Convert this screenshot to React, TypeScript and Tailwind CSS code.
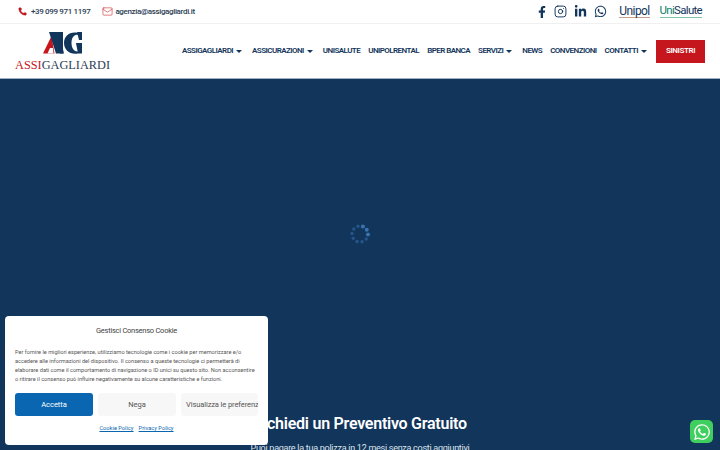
import { Phone, Mail, Instagram } from 'lucide-react';
import { FaFacebookF, FaLinkedinIn, FaWhatsapp } from 'react-icons/fa';

const titleFont = "font-['Roboto','Liberation_Sans',sans-serif]";

const navItems = [
  { label: 'ASSIGAGLIARDI', caret: true },
  { label: 'ASSICURAZIONI', caret: true },
  { label: 'UNISALUTE' },
  { label: 'UNIPOLRENTAL' },
  { label: 'BPER BANCA' },
  { label: 'SERVIZI', caret: true },
  { label: 'NEWS' },
  { label: 'CONVENZIONI' },
  { label: 'CONTATTI', caret: true },
];

function Caret() {
  return <span className="ml-[3px] mr-[2px] h-0 w-0 border-x-[3px] border-t-[3px] border-x-transparent border-t-[#12355b]" />;
}

function Logo() {
  return (
    <div className="flex w-[95px] flex-col items-center">
      <svg width="40" height="23" viewBox="0 0 40 23">
        <path d="M0 21.5 L8.5 4 L11.5 21.5 Z" fill="#c4161c" />
        <path d="M4.5 21.5 L7 16 H10 L10.5 21.5 Z" fill="#fff" />
        <path d="M6 0 H16 L21 21.5 H13 Z" fill="#12355b" />
        <path d="M15 0 H20 V21.5 H17 Z" fill="#12355b" />
        <path d="M35 1 C27 -1 21 4 21 11 C21 18 27 23 35 21.5 V19.5 C31 20 28.5 16 28.5 11 C28.5 6 31 2 35 3 Z" fill="#12355b" />
        <path d="M34 0 H39 V8 H36 Z M33 11 H39 V21.5 H35 Z" fill="#12355b" />
      </svg>
      <div className="mt-[4px] whitespace-nowrap font-['Liberation_Serif',serif] text-[12.3px] leading-[12px] text-[#2c3e55]">
        <span className="text-[#c4161c]">ASSI</span>GAGLIARDI
      </div>
    </div>
  );
}

function PartnerLogos() {
  return (
    <div className="ml-[12px] flex items-center gap-[10px] leading-none">
      <span className="border-b border-[#c9a08c] text-[12px] tracking-[-0.6px] text-[#12355b]">Unipol</span>
      <span className="border-b border-[#7fc7a5] text-[11.5px] tracking-[-0.7px] text-[#12355b]">
        <span className="text-[#0d7f6b]">Uni</span>Salute
      </span>
    </div>
  );
}

function Spinner() {
  const dots = Array.from({ length: 10 }, (_, i) => (i * Math.PI * 2) / 10);
  return (
    <svg width="22" height="22" viewBox="0 0 22 22" className="blur-[0.6px]">
      {dots.map((a, i) => (
        <circle
          key={i}
          cx={11 + 8 * Math.cos(a - 1.2)}
          cy={11 + 8 * Math.sin(a - 1.2)}
          r={i < 3 ? 2 : 1.7}
          fill="#3f7fc0"
          opacity={i < 3 ? 0.85 : 0.45}
        />
      ))}
    </svg>
  );
}

function CookieModal() {
  return (
    <div className="absolute left-[5px] top-[316px] flex h-[129px] w-[263px] flex-col rounded-[4px] bg-white px-[10px] pt-[10px]">
      <p className="text-center text-[7.5px] leading-[10px] tracking-[-0.25px] text-[#444]">Gestisci Consenso Cookie</p>
      <p className="mt-[12px] whitespace-nowrap text-[5.6px] leading-[9px] text-[#555]">
        Per fornire le migliori esperienze, utilizziamo tecnologie come i cookie per memorizzare e/o
        <br />
        accedere alle informazioni del dispositivo. Il consenso a queste tecnologie ci permetterà di
        <br />
        elaborare dati come il comportamento di navigazione o ID unici su questo sito. Non acconsentire
        <br />
        o ritirare il consenso può influire negativamente su alcune caratteristiche e funzioni.
      </p>
      <div className="mt-[9px] flex gap-[5px] text-[7.5px] leading-none">
        <button className="flex h-[23px] w-[78px] items-center justify-center rounded-[3px] bg-[#0a66b0] text-white">Accetta</button>
        <button className="flex h-[23px] w-[78px] items-center justify-center rounded-[3px] bg-[#f7f7f7] text-[#555]">Nega</button>
        <button className="flex h-[23px] w-[77px] items-center justify-start overflow-hidden whitespace-nowrap rounded-[3px] bg-[#f7f7f7] pl-[5px] text-[7.5px] tracking-[-0.1px] text-[#555]">
          Visualizza le preferenze
        </button>
      </div>
      <div className="mt-[8px] flex justify-center gap-[5px] text-[5.7px] leading-[8px] text-[#0a66b0] underline">
        <span>Cookie Policy</span>
        <span>Privacy Policy</span>
      </div>
    </div>
  );
}

export default function App() {
  return (
    <div className={`${titleFont} relative flex h-[450px] w-[720px] flex-col overflow-hidden bg-white`}>
      <div className="flex h-[24px] shrink-0 items-center border-b border-[#f0f0f0] px-[18px]">
        <Phone className="h-[9px] w-[9px] fill-[#c4161c] text-[#c4161c]" strokeWidth={1} />
        <span className="ml-[4px] text-[8px] font-medium tracking-[-0.35px] text-[#2c3e55]">+39 099 971 1197</span>
        <Mail className="ml-[12px] h-[11px] w-[11px] text-[#c4161c]" strokeWidth={1.2} />
        <span className="ml-[2px] text-[8px] font-medium tracking-[-0.35px] text-[#2c3e55]">agenzia@assigagliardi.it</span>
        <div className="ml-auto flex items-center gap-[7px] text-[#12355b]">
          <FaFacebookF className="h-[12px] w-[10px]" />
          <Instagram className="h-[13px] w-[13px]" strokeWidth={1.8} />
          <FaLinkedinIn className="h-[13px] w-[13px]" />
          <FaWhatsapp className="h-[13px] w-[13px]" />
        </div>
        <PartnerLogos />
      </div>

      <div className="flex h-[54px] shrink-0 items-center px-[15px]">
        <Logo />
        <nav className="ml-auto flex items-center gap-[8px] text-[8px] font-semibold tracking-[-0.55px] text-[#12355b]">
          {navItems.map((item) => (
            <span key={item.label} className="flex items-center whitespace-nowrap">
              {item.label}
              {item.caret && <Caret />}
            </span>
          ))}
        </nav>
        <button className="ml-[7px] flex h-[23px] w-[49px] items-center justify-center bg-[#c4161c] text-[8px] font-semibold tracking-[-0.4px] text-white">
          SINISTRI
        </button>
      </div>

      <main className="flex flex-1 flex-col items-center border-t border-[#9fb0c2] bg-[#12355b] text-white">
        <div className="mt-[144px]">
          <Spinner />
        </div>
        <h2 className="mt-[169px] text-[16px] font-semibold leading-[20px] tracking-[-0.25px]">Richiedi un Preventivo Gratuito</h2>
        <p className="mt-[7px] whitespace-nowrap text-[9px] leading-[14px] tracking-[-0.27px] text-[#dde4ec]">Puoi pagare la tua polizza in 12 mesi senza costi aggiuntivi</p>
      </main>

      <CookieModal />

      <div className="absolute left-[690px] top-[420px] flex h-[23px] w-[23px] items-center justify-center rounded-[5px] bg-[#3fcf5f]">
        <FaWhatsapp className="h-[18px] w-[18px] text-white" />
      </div>
    </div>
  );
}
